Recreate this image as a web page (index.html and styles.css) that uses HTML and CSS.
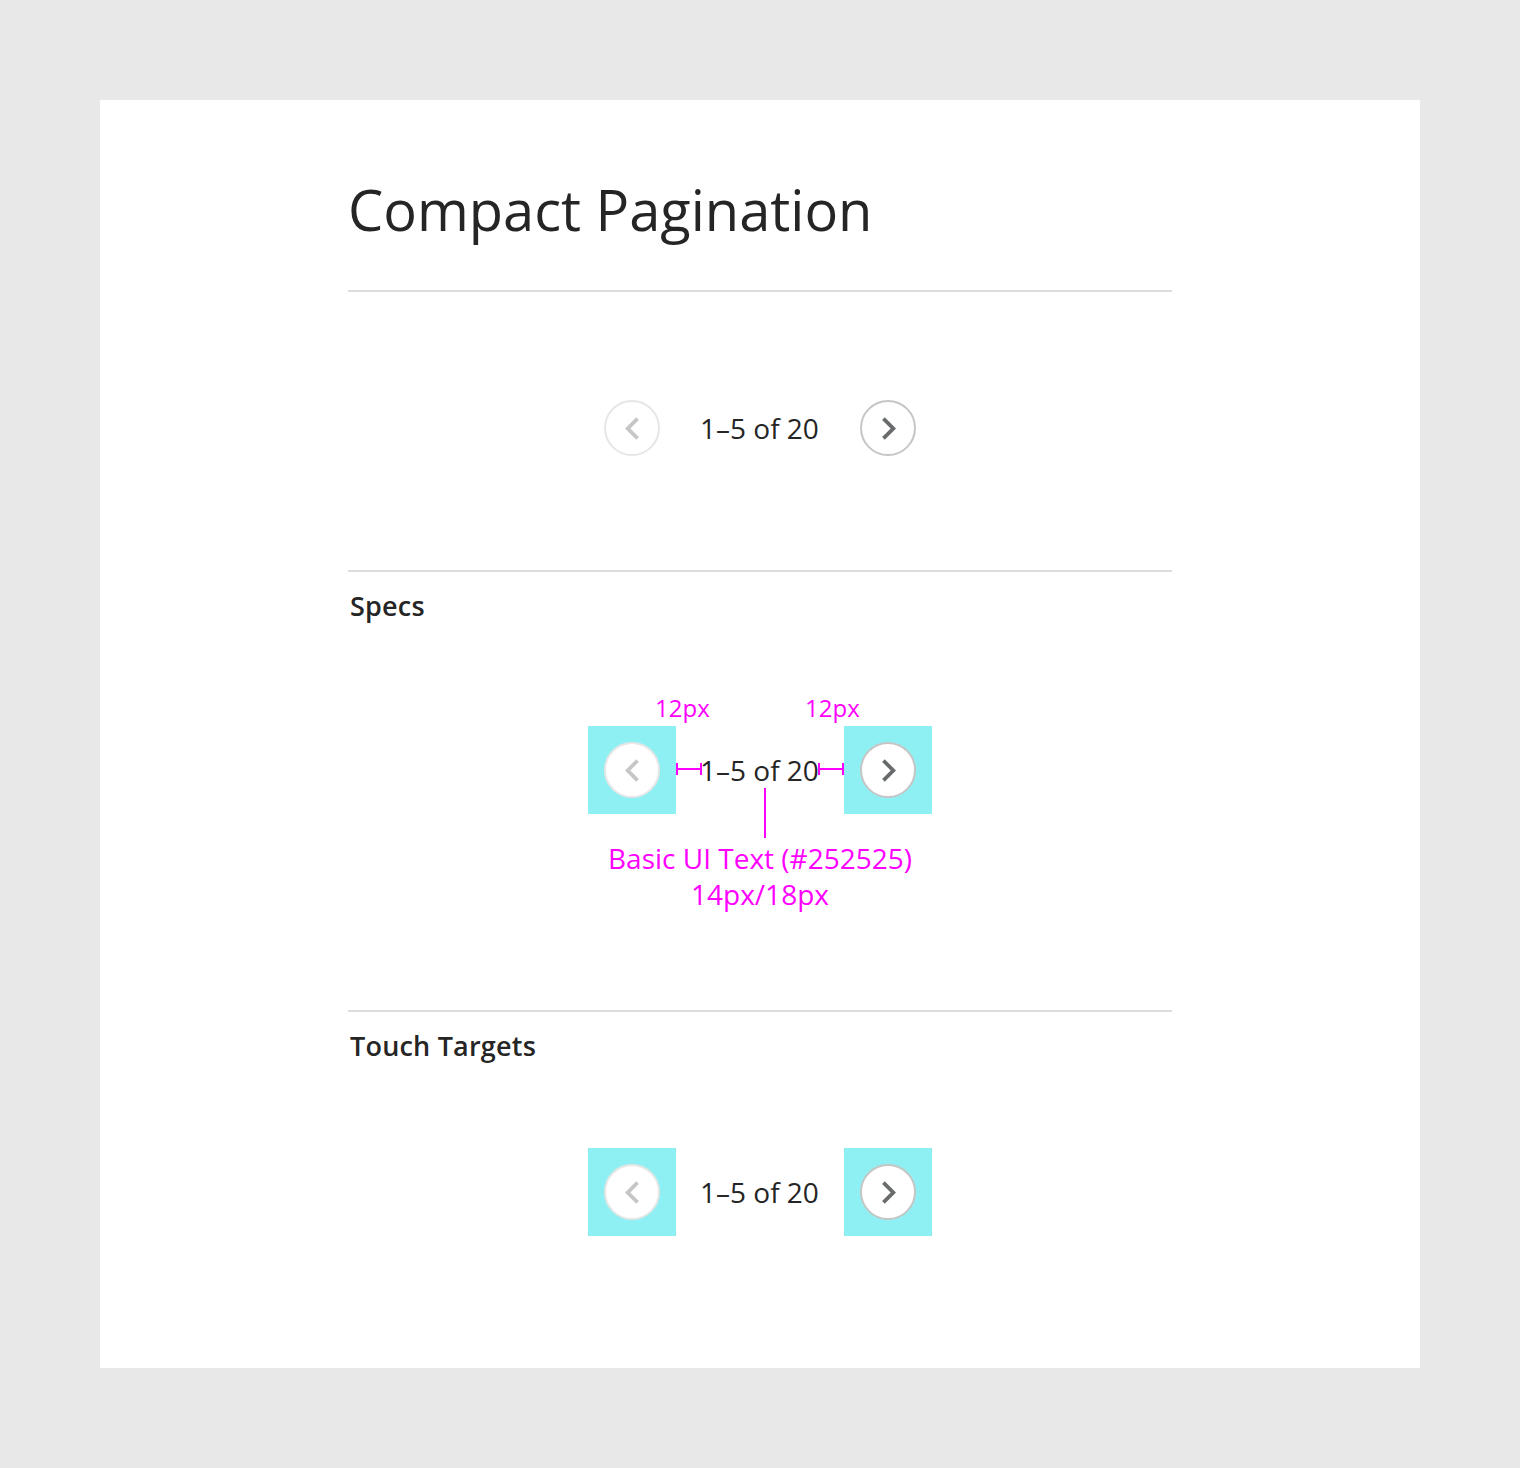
FILE: index.html
```html
<!DOCTYPE html>
<html lang="en">
<head>
<meta charset="utf-8">
<title>Compact Pagination</title>
<link rel="stylesheet" href="styles.css">
</head>
<body>
<main class="card">
  <div class="content">
    <h1 class="title">Compact Pagination</h1>
    <hr class="rule rule-title">

    <section class="demo demo-main">
      <div class="pager">
        <div class="target"><span class="btn btn-disabled"><svg viewBox="0 0 24 24"><path d="M15.41 7.41L14 6l-6 6 6 6 1.41-1.41L10.83 12z"/></svg></span></div>
        <span class="range">1–5 of 20</span>
        <div class="target"><span class="btn"><svg viewBox="0 0 24 24"><path d="M10 6L8.59 7.41 13.17 12l-4.58 4.59L10 18l6-6z"/></svg></span></div>
      </div>
    </section>

    <hr class="rule">
    <h2 class="section-title">Specs</h2>

    <section class="demo demo-specs">
      <div class="pager pager-spec">
        <div class="target target-hi"><span class="btn btn-disabled"><svg viewBox="0 0 24 24"><path d="M15.41 7.41L14 6l-6 6 6 6 1.41-1.41L10.83 12z"/></svg></span></div>
        <span class="range">1–5 of 20</span>
        <div class="target target-hi"><span class="btn"><svg viewBox="0 0 24 24"><path d="M10 6L8.59 7.41 13.17 12l-4.58 4.59L10 18l6-6z"/></svg></span></div>
        <span class="note-label note-left">12px</span>
        <span class="note-label note-right">12px</span>
        <span class="marker marker-left"></span>
        <span class="marker marker-right"></span>
        <span class="leader"></span>
      </div>
      <p class="caption">Basic UI Text (#252525)<br>14px/18px</p>
    </section>

    <hr class="rule">
    <h2 class="section-title">Touch Targets</h2>

    <section class="demo demo-touch">
      <div class="pager">
        <div class="target target-hi"><span class="btn btn-disabled"><svg viewBox="0 0 24 24"><path d="M15.41 7.41L14 6l-6 6 6 6 1.41-1.41L10.83 12z"/></svg></span></div>
        <span class="range">1–5 of 20</span>
        <div class="target target-hi"><span class="btn"><svg viewBox="0 0 24 24"><path d="M10 6L8.59 7.41 13.17 12l-4.58 4.59L10 18l6-6z"/></svg></span></div>
      </div>
    </section>
  </div>
</main>
</body>
</html>
```

FILE: styles.css
```css
* { box-sizing: border-box; }

html, body {
  margin: 0;
  padding: 0;
}

body {
  background: #e8e8e8;
  padding: 100px;
  font-family: "Open Sans", "Noto Sans", sans-serif;
  color: #252525;
}

.card {
  background: #ffffff;
  width: 1320px;
  height: 1268px;
  padding: 71px 0 0 248px;
}

.content {
  width: 824px;
}

.title {
  margin: 0 0 43px 0;
  font-size: 56px;
  line-height: 76px;
  font-weight: 400;
  color: #252525;
}

.rule {
  display: block;
  margin: 0;
  border: 0;
  height: 2px;
  background: #dcdcdc;
}

.section-title {
  margin: 16px 0 0 2px;
  font-size: 27px;
  line-height: 36px;
  font-weight: 600;
  letter-spacing: 0.2px;
  color: #252525;
}

.demo {
  display: flex;
  flex-direction: column;
  align-items: center;
}

.demo-main {
  padding: 92px 0 98px;
}

.demo-specs {
  padding: 102px 0 98px;
}

.demo-touch {
  padding: 84px 0 0;
}

.pager {
  position: relative;
  display: flex;
  align-items: center;
  gap: 24px;
}

.target {
  width: 88px;
  height: 88px;
  display: flex;
  align-items: center;
  justify-content: center;
}

.target-hi {
  background: #8ff0f4;
}

.btn {
  width: 56px;
  height: 56px;
  border-radius: 50%;
  border: 2px solid #c6c6c6;
  background: #ffffff;
  display: flex;
  align-items: center;
  justify-content: center;
}

.btn svg {
  width: 45px;
  height: 45px;
  fill: #686c6c;
}

.btn-disabled {
  border-color: #e6e6e6;
}

.btn-disabled svg {
  fill: #c6c6c6;
}

.range {
  width: 120px;
  font-size: 28px;
  line-height: 36px;
  color: #252525;
  white-space: nowrap;
}

.note-label {
  position: absolute;
  top: -32px;
  font-size: 24px;
  line-height: 28px;
  color: #ff00ff;
}

.note-left { left: 67px; }
.note-right { left: 217px; }

.marker {
  position: absolute;
  top: 37px;
  width: 26px;
  height: 12px;
  border-left: 2px solid #ff00ff;
  border-right: 2px solid #ff00ff;
}

.marker::before {
  content: "";
  position: absolute;
  left: 0;
  right: 0;
  top: 5px;
  height: 2px;
  background: #ff00ff;
}

.marker-left { left: 88px; }
.marker-right { left: 230px; }

.leader {
  position: absolute;
  left: 176px;
  top: 62px;
  width: 2px;
  height: 50px;
  background: #ff00ff;
}

.caption {
  margin: 26px 0 0;
  font-size: 28px;
  line-height: 36px;
  color: #ff00ff;
  text-align: center;
}
```
